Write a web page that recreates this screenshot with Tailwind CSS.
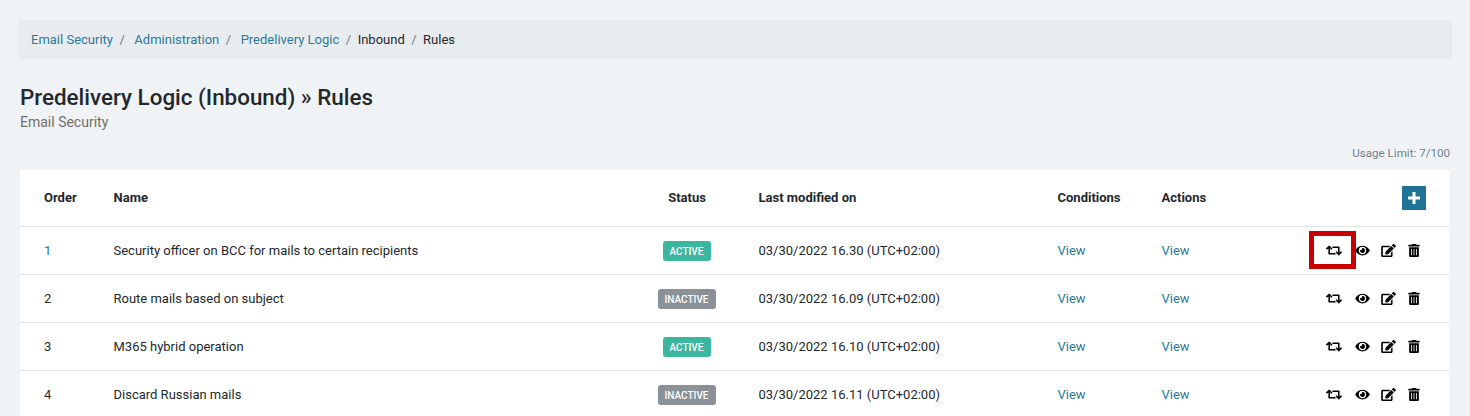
<!DOCTYPE html>
<html lang="en">
<head>
    <meta charset="UTF-8">
    <title>Predelivery Logic (Inbound) - Rules</title>
    <script src="https://cdn.jsdelivr.net/npm/@tailwindcss/browser@4"></script>
</head>
<body class="h-[416px] overflow-hidden bg-[#f0f3f5] font-['Roboto',sans-serif] text-[13px] text-[#23282c]">
    <svg class="hidden">
        <symbol id="i-retweet" viewBox="0 0 640 512"><path fill="currentColor" d="M629.657 343.598L528.971 444.284c-9.373 9.372-24.568 9.372-33.941 0L394.343 343.598c-9.373-9.373-9.373-24.569 0-33.941l10.823-10.823c9.562-9.562 25.133-9.34 34.419.492L480 342.118V160H292.451a24.005 24.005 0 0 1-16.971-7.029l-16-16C244.361 121.851 255.069 96 276.451 96H520c13.255 0 24 10.745 24 24v222.118l40.416-43.792c9.285-9.831 24.856-10.054 34.419-.492l10.823 10.823c9.372 9.372 9.372 24.569-.001 33.941zm-265.138 15.431A23.999 23.999 0 0 0 347.548 352H160V169.881l40.416 43.792c9.286 9.831 24.856 10.054 34.419.491l10.822-10.822c9.373-9.373 9.373-24.569 0-33.941L144.971 67.716c-9.373-9.373-24.569-9.373-33.941 0L10.343 168.402c-9.373 9.373-9.373 24.569 0 33.941l10.822 10.822c9.562 9.562 25.133 9.34 34.419-.491L96 169.881V392c0 13.255 10.745 24 24 24h243.549c21.382 0 32.09-25.851 16.971-40.971l-16.001-16z"/></symbol>
        <symbol id="i-eye" viewBox="0 0 576 512"><path fill="currentColor" d="M572.52 241.4C518.29 135.59 410.93 64 288 64S57.68 135.64 3.48 241.41a32.35 32.35 0 0 0 0 29.19C57.71 376.41 165.07 448 288 448s230.32-71.64 284.52-177.41a32.35 32.35 0 0 0 0-29.19zM288 400a144 144 0 1 1 144-144 143.93 143.93 0 0 1-144 144zm0-240a95.31 95.31 0 0 0-25.31 3.79 47.85 47.85 0 0 1-66.9 66.9A95.78 95.78 0 1 0 288 160z"/></symbol>
        <symbol id="i-edit" viewBox="0 0 576 512"><path fill="currentColor" d="M402.6 83.2l90.2 90.2c3.8 3.8 3.8 10 0 13.8L274.4 405.6l-92.8 10.3c-12.4 1.4-22.9-9.1-21.5-21.5l10.3-92.8L388.8 83.2c3.8-3.8 10-3.8 13.8 0zm162-22.9l-48.8-48.8c-15.2-15.2-39.9-15.2-55.2 0l-35.4 35.4c-3.8 3.8-3.8 10 0 13.8l90.2 90.2c3.8 3.8 10 3.8 13.8 0l35.4-35.4c15.2-15.3 15.2-40 0-55.2zM384 346.2V448H64V128h229.8c3.2 0 6.2-1.3 8.5-3.5l40-40c7.6-7.6 2.2-20.5-8.5-20.5H48C21.5 64 0 85.5 0 112v352c0 26.5 21.5 48 48 48h352c26.5 0 48-21.5 48-48V306.2c0-10.7-12.9-16-20.5-8.5l-40 40c-2.2 2.3-3.5 5.3-3.5 8.5z"/></symbol>
        <symbol id="i-trash" viewBox="0 0 448 512"><path fill="currentColor" d="M32 464a48 48 0 0 0 48 48h288a48 48 0 0 0 48-48V128H32zm272-256a16 16 0 0 1 32 0v224a16 16 0 0 1-32 0zm-96 0a16 16 0 0 1 32 0v224a16 16 0 0 1-32 0zm-96 0a16 16 0 0 1 32 0v224a16 16 0 0 1-32 0zM432 32H312l-9.4-18.7A24 24 0 0 0 281.1 0H166.8a23.72 23.72 0 0 0-21.4 13.3L136 32H16A16 16 0 0 0 0 48v32a16 16 0 0 0 16 16h416a16 16 0 0 0 16-16V48a16 16 0 0 0-16-16z"/></symbol>
    </svg>

    <div class="pt-5 px-[18px]">
        <!-- Breadcrumb -->
        <nav class="flex items-center h-[39px] px-[13px] bg-[#e9ecef] leading-[39px]">
            <a class="text-[#2a7a9b]">Email Security</a><span class="text-[#73818f] pl-[6.5px] pr-[9.5px]">/</span>
            <a class="text-[#2a7a9b]">Administration</a><span class="text-[#73818f] pl-[6.5px] pr-[9.5px]">/</span>
            <a class="text-[#2a7a9b]">Predelivery Logic</a><span class="text-[#73818f] px-[6.5px]">/</span>
            <span>Inbound</span><span class="text-[#73818f] px-[6.5px]">/</span>
            <span>Rules</span>
        </nav>

        <div class="px-[2px]">
            <h1 class="mt-[24px] text-[22.4px] leading-[29px] font-medium">Predelivery Logic (Inbound) » Rules</h1>
            <p class="text-[14px] leading-[20px] text-[#6f6f6f]">Email Security</p>
            <p class="mt-[12px] text-right text-[11.6px] leading-[18px] text-[#73818f]">Usage Limit: 7/100</p>

            <!-- Rules table -->
            <div class="relative mt-[8px] bg-white">
                <div class="grid grid-cols-[93.5px_521px_124px_299px_104px_1fr] items-center h-[56px] font-bold">
                    <div class="pl-6">Order</div>
                    <div>Name</div>
                    <div class="text-center pr-[19px]">Status</div>
                    <div>Last modified on</div>
                    <div>Conditions</div>
                    <div class="flex items-center justify-between pr-6">
                        <span>Actions</span>
                        <button class="flex items-center justify-center w-6 h-6 bg-[#1f7396] text-white">
                            <svg class="w-3 h-3" viewBox="0 0 12 12"><path d="M6 0v12M0 6h12" stroke="currentColor" stroke-width="3"/></svg>
                        </button>
                    </div>
                </div>

                <div class="grid grid-cols-[93.5px_521px_124px_299px_104px_1fr] items-center h-[48px] border-t border-[#e1e3e5]">
                    <div class="pl-6 text-[#2a7a9b]">1</div>
                    <div>Security officer on BCC for mails to certain recipients</div>
                    <div class="flex justify-center pr-[20px] pt-px"><span class="rounded-[3px] bg-[#3cb79f] w-[48px] h-5 text-center text-[10px] leading-[22px] font-medium text-white">ACTIVE</span></div>
                    <div>03/30/2022 16.30 (UTC+02:00)</div>
                    <div class="text-[#2a7a9b]">View</div>
                    <div class="flex items-center justify-between pr-[30px]">
                        <span class="text-[#2a7a9b]">View</span>
                        <div class="flex items-center text-black">
                            <svg class="w-4 h-[13px]"><use href="#i-retweet"/></svg>
                            <svg class="w-[15px] h-[13px] ml-[13px]"><use href="#i-eye"/></svg>
                            <svg class="w-[15px] h-[13px] ml-[11px]"><use href="#i-edit"/></svg>
                            <svg class="w-[12px] h-[13px] ml-[12px]"><use href="#i-trash"/></svg>
                        </div>
                    </div>
                </div>

                <div class="grid grid-cols-[93.5px_521px_124px_299px_104px_1fr] items-center h-[48px] border-t border-[#e1e3e5]">
                    <div class="pl-6">2</div>
                    <div>Route mails based on subject</div>
                    <div class="flex justify-center pr-[20px] pt-px"><span class="rounded-[3px] bg-[#8a9199] w-[58px] h-5 text-center text-[10px] leading-[22px] font-medium text-white">INACTIVE</span></div>
                    <div>03/30/2022 16.09 (UTC+02:00)</div>
                    <div class="text-[#2a7a9b]">View</div>
                    <div class="flex items-center justify-between pr-[30px]">
                        <span class="text-[#2a7a9b]">View</span>
                        <div class="flex items-center text-black">
                            <svg class="w-4 h-[13px]"><use href="#i-retweet"/></svg>
                            <svg class="w-[15px] h-[13px] ml-[13px]"><use href="#i-eye"/></svg>
                            <svg class="w-[15px] h-[13px] ml-[11px]"><use href="#i-edit"/></svg>
                            <svg class="w-[12px] h-[13px] ml-[12px]"><use href="#i-trash"/></svg>
                        </div>
                    </div>
                </div>

                <div class="grid grid-cols-[93.5px_521px_124px_299px_104px_1fr] items-center h-[48px] border-t border-[#e1e3e5]">
                    <div class="pl-6">3</div>
                    <div>M365 hybrid operation</div>
                    <div class="flex justify-center pr-[20px] pt-px"><span class="rounded-[3px] bg-[#3cb79f] w-[48px] h-5 text-center text-[10px] leading-[22px] font-medium text-white">ACTIVE</span></div>
                    <div>03/30/2022 16.10 (UTC+02:00)</div>
                    <div class="text-[#2a7a9b]">View</div>
                    <div class="flex items-center justify-between pr-[30px]">
                        <span class="text-[#2a7a9b]">View</span>
                        <div class="flex items-center text-black">
                            <svg class="w-4 h-[13px]"><use href="#i-retweet"/></svg>
                            <svg class="w-[15px] h-[13px] ml-[13px]"><use href="#i-eye"/></svg>
                            <svg class="w-[15px] h-[13px] ml-[11px]"><use href="#i-edit"/></svg>
                            <svg class="w-[12px] h-[13px] ml-[12px]"><use href="#i-trash"/></svg>
                        </div>
                    </div>
                </div>

                <div class="grid grid-cols-[93.5px_521px_124px_299px_104px_1fr] items-center h-[48px] border-t border-[#e1e3e5]">
                    <div class="pl-6">4</div>
                    <div>Discard Russian mails</div>
                    <div class="flex justify-center pr-[20px] pt-px"><span class="rounded-[3px] bg-[#8a9199] w-[58px] h-5 text-center text-[10px] leading-[22px] font-medium text-white">INACTIVE</span></div>
                    <div>03/30/2022 16.11 (UTC+02:00)</div>
                    <div class="text-[#2a7a9b]">View</div>
                    <div class="flex items-center justify-between pr-[30px]">
                        <span class="text-[#2a7a9b]">View</span>
                        <div class="flex items-center text-black">
                            <svg class="w-4 h-[13px]"><use href="#i-retweet"/></svg>
                            <svg class="w-[15px] h-[13px] ml-[13px]"><use href="#i-eye"/></svg>
                            <svg class="w-[15px] h-[13px] ml-[11px]"><use href="#i-edit"/></svg>
                            <svg class="w-[12px] h-[13px] ml-[12px]"><use href="#i-trash"/></svg>
                        </div>
                    </div>
                </div>

                <!-- red highlight drawn over the first row -->
                <div class="absolute left-[1289px] top-[61px] w-[47px] h-[38px] border-[5px] border-[#c80000]"></div>
            </div>
        </div>
    </div>
</body>
</html>
